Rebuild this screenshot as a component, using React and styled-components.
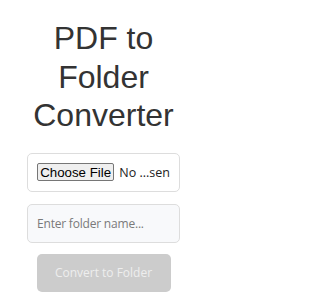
import styled, { createGlobalStyle } from "styled-components";

const GlobalStyle = createGlobalStyle`
  html, body {
    margin: 0;
    padding: 0;
    background: #ffffff;
  }
  body {
    font-family: "Open Sans", "Noto Sans", sans-serif;
  }
`;

const Page = styled.div`
  box-sizing: border-box;
  display: flex;
  flex-direction: column;
  align-items: center;
  width: 204px;
  padding: 19px 0 0 3px;
`;

const Title = styled.h1`
  margin: 0 0 18px;
  font-family: "Liberation Sans", Arial, sans-serif;
  font-size: 32px;
  font-weight: 400;
  line-height: 38.5px;
  color: #333333;
  text-align: center;
`;

const Form = styled.div`
  display: flex;
  flex-direction: column;
  align-items: center;
  gap: 12px;
`;

const FileBox = styled.label`
  box-sizing: border-box;
  display: flex;
  align-items: center;
  gap: 5px;
  width: 153px;
  height: 39px;
  padding: 0 9px;
  border: 1px solid #dddddd;
  border-radius: 5px;
  background: #ffffff;
  cursor: pointer;
`;

const HiddenInput = styled.input`
  display: none;
`;

const FileButton = styled.span`
  box-sizing: border-box;
  display: inline-flex;
  align-items: center;
  justify-content: center;
  width: 79px;
  height: 18px;
  border: 1px solid #767676;
  border-radius: 2px;
  background: #efefef;
  font-family: "Liberation Sans", Arial, sans-serif;
  font-size: 13.3px;
  color: #000000;
`;

const FileName = styled.span`
  font-size: 12.5px;
  color: #222222;
  white-space: nowrap;
`;

const NameInput = styled.input`
  box-sizing: border-box;
  width: 153px;
  height: 39px;
  padding: 0 9px;
  border: 1px solid #dddddd;
  border-radius: 5px;
  background: #f8f9fb;
  font-family: "Open Sans", "Noto Sans", sans-serif;
  font-size: 12px;
  letter-spacing: -0.2px;
  color: #333333;
  outline: none;

  &::placeholder {
    color: #7a7a7a;
  }
`;

const ConvertButton = styled.button`
  width: 134px;
  height: 38px;
  margin-top: -1px;
  border: none;
  border-radius: 5px;
  background: #cccccc;
  font-family: "Open Sans", "Noto Sans", sans-serif;
  font-size: 12px;
  color: #eeeeee;
  cursor: not-allowed;
`;

export default function App() {
  return (
    <>
      <GlobalStyle />
      <Page>
        <Title>
          PDF to
          <br />
          Folder
          <br />
          Converter
        </Title>
        <Form>
          <FileBox>
            <HiddenInput type="file" accept="application/pdf" />
            <FileButton>Choose File</FileButton>
            <FileName>No ...sen</FileName>
          </FileBox>
          <NameInput type="text" placeholder="Enter folder name..." />
          <ConvertButton disabled>Convert to Folder</ConvertButton>
        </Form>
      </Page>
    </>
  );
}
